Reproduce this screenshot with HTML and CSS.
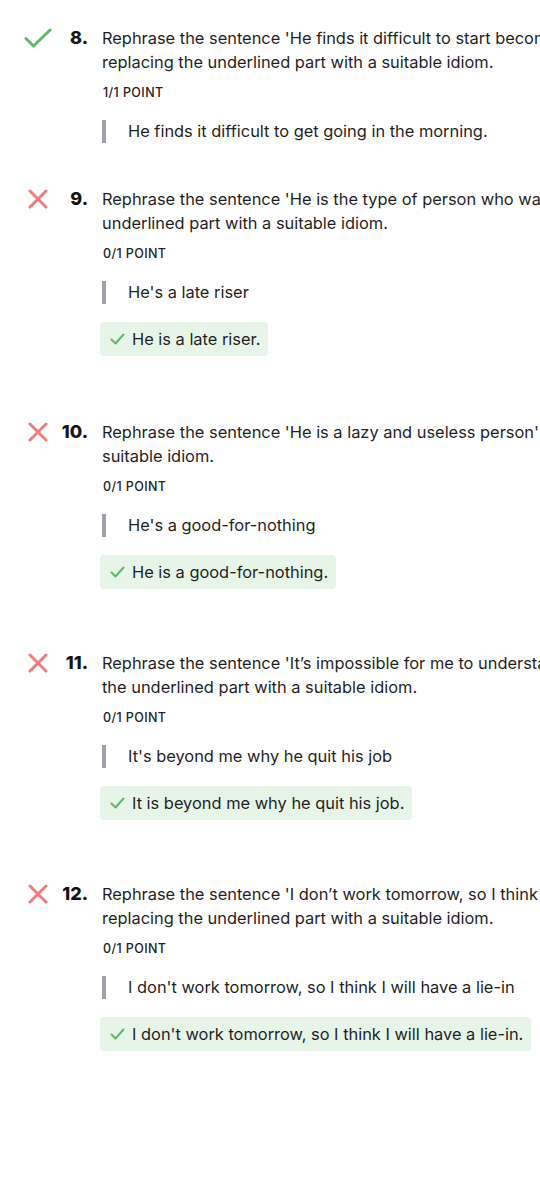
FILE: index.html
```html
<!DOCTYPE html>
<html lang="en">
<head>
<meta charset="utf-8">
<title>Quiz results</title>
<link rel="stylesheet" href="styles.css">
</head>
<body>
<main class="list">

  <section class="q">
    <div class="q-head">
      <span class="mark"><svg viewBox="0 0 28 20" width="28" height="20"><path d="M2 10.5 L9.5 18 L26 2" fill="none" stroke="#5cb96b" stroke-width="3" stroke-linecap="round" stroke-linejoin="round"/></svg></span>
      <span class="num">8.</span>
      <p class="text">Rephrase the sentence 'He finds it difficult to start becoming active in the morning' by<br>replacing the underlined part with a suitable idiom.</p>
    </div>
    <div class="q-body">
      <div class="points">1/1 POINT</div>
      <blockquote class="answer">He finds it difficult to get going in the morning.</blockquote>
    </div>
  </section>

  <section class="q">
    <div class="q-head">
      <span class="mark"><svg viewBox="0 0 20 20" width="20" height="20"><path d="M2 2 L18 18 M18 2 L2 18" fill="none" stroke="#ec7e7e" stroke-width="3" stroke-linecap="round"/></svg></span>
      <span class="num">9.</span>
      <p class="text">Rephrase the sentence 'He is the type of person who wakes up late' by replacing the<br>underlined part with a suitable idiom.</p>
    </div>
    <div class="q-body">
      <div class="points">0/1 POINT</div>
      <blockquote class="answer">He's a late riser</blockquote>
      <div class="correct"><svg viewBox="0 0 15 12" width="15" height="12"><path d="M1.5 6.5 L5.5 10.5 L13.5 1.5" fill="none" stroke="#5cb96b" stroke-width="2" stroke-linecap="round" stroke-linejoin="round"/></svg><span>He is a late riser.</span></div>
    </div>
  </section>

  <section class="q">
    <div class="q-head">
      <span class="mark"><svg viewBox="0 0 20 20" width="20" height="20"><path d="M2 2 L18 18 M18 2 L2 18" fill="none" stroke="#ec7e7e" stroke-width="3" stroke-linecap="round"/></svg></span>
      <span class="num">10.</span>
      <p class="text">Rephrase the sentence 'He is a lazy and useless person' by replacing the underlined part with a<br>suitable idiom.</p>
    </div>
    <div class="q-body">
      <div class="points">0/1 POINT</div>
      <blockquote class="answer">He's a good-for-nothing</blockquote>
      <div class="correct"><svg viewBox="0 0 15 12" width="15" height="12"><path d="M1.5 6.5 L5.5 10.5 L13.5 1.5" fill="none" stroke="#5cb96b" stroke-width="2" stroke-linecap="round" stroke-linejoin="round"/></svg><span>He is a good-for-nothing.</span></div>
    </div>
  </section>

  <section class="q">
    <div class="q-head">
      <span class="mark"><svg viewBox="0 0 20 20" width="20" height="20"><path d="M2 2 L18 18 M18 2 L2 18" fill="none" stroke="#ec7e7e" stroke-width="3" stroke-linecap="round"/></svg></span>
      <span class="num">11.</span>
      <p class="text">Rephrase the sentence 'It’s impossible for me to understand why he quit his job' by replacing<br>the underlined part with a suitable idiom.</p>
    </div>
    <div class="q-body">
      <div class="points">0/1 POINT</div>
      <blockquote class="answer">It's beyond me why he quit his job</blockquote>
      <div class="correct"><svg viewBox="0 0 15 12" width="15" height="12"><path d="M1.5 6.5 L5.5 10.5 L13.5 1.5" fill="none" stroke="#5cb96b" stroke-width="2" stroke-linecap="round" stroke-linejoin="round"/></svg><span>It is beyond me why he quit his job.</span></div>
    </div>
  </section>

  <section class="q">
    <div class="q-head">
      <span class="mark"><svg viewBox="0 0 20 20" width="20" height="20"><path d="M2 2 L18 18 M18 2 L2 18" fill="none" stroke="#ec7e7e" stroke-width="3" stroke-linecap="round"/></svg></span>
      <span class="num">12.</span>
      <p class="text">Rephrase the sentence 'I don’t work tomorrow, so I think I will stay in bed late' by<br>replacing the underlined part with a suitable idiom.</p>
    </div>
    <div class="q-body">
      <div class="points">0/1 POINT</div>
      <blockquote class="answer">I don't work tomorrow, so I think I will have a lie-in</blockquote>
      <div class="correct"><svg viewBox="0 0 15 12" width="15" height="12"><path d="M1.5 6.5 L5.5 10.5 L13.5 1.5" fill="none" stroke="#5cb96b" stroke-width="2" stroke-linecap="round" stroke-linejoin="round"/></svg><span>I don't work tomorrow, so I think I will have a lie-in.</span></div>
    </div>
  </section>

</main>
</body>
</html>
```

FILE: styles.css
```css
html, body {
  margin: 0;
  padding: 0;
  background: #ffffff;
  overflow-x: hidden;
}

body {
  font-family: Inter, "Noto Sans", "Liberation Sans", sans-serif;
  color: #1f1f1f;
  font-size: 16.4px;
  line-height: 24px;
}

.list {
  padding-top: 26px;
  padding-left: 24px;
}

.q {
  margin-bottom: 44px;
}

.q:nth-child(2) {
  margin-bottom: 46px;
}

.q-head {
  display: flex;
  align-items: flex-start;
}

.mark {
  width: 28px;
  height: 24px;
  display: flex;
  align-items: center;
  justify-content: center;
  flex: none;
}

.num {
  width: 36px;
  flex: none;
  text-align: right;
  font-weight: 800;
  font-size: 18px;
  color: #141414;
}

.text {
  margin: 0 0 0 14px;
  white-space: nowrap;
}

.q-body {
  padding-left: 78px;
}

.points {
  margin-top: 11px;
  padding-left: 1px;
  font-size: 12.5px;
  letter-spacing: 0.4px;
  line-height: 16px;
  font-weight: 500;
  color: #222;
}

.answer {
  margin: 19px 0 0 0;
  padding-left: 22px;
  border-left: 4px solid #9ea3ab;
  line-height: 23px;
  color: #1f1f1f;
}

.correct {
  display: inline-flex;
  align-items: center;
  gap: 7px;
  margin: 18px 0 18px -2px;
  height: 34px;
  padding: 0 8px 0 10px;
  background: #e7f5e9;
  border-radius: 4px;
}

.correct svg {
  flex: none;
}
```
